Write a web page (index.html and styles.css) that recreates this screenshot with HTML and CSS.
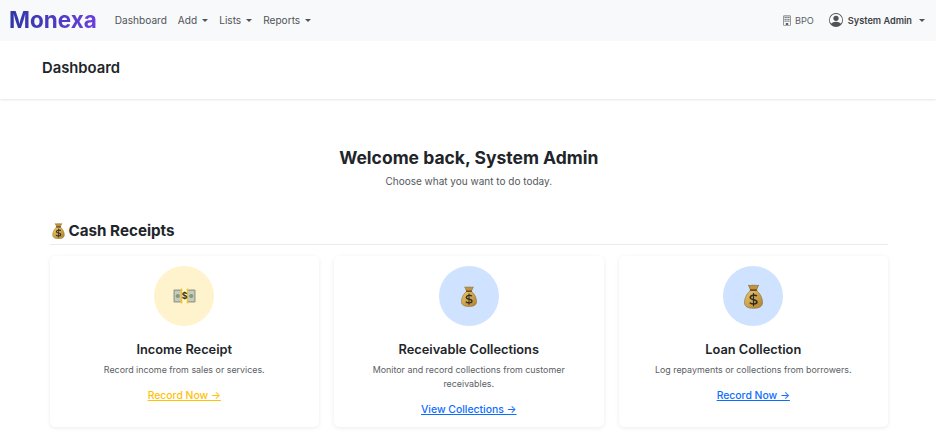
FILE: index.html
```html
<!DOCTYPE html>
<html lang="en">
<head>
<meta charset="utf-8">
<title>Monexa - Dashboard</title>
<link rel="stylesheet" href="styles.css">
</head>
<body>
<svg class="defs" width="0" height="0" aria-hidden="true">
  <defs>
    <linearGradient id="bagFill" x1="0" y1="0" x2="1" y2="1">
      <stop offset="0" stop-color="#edc769"/>
      <stop offset="1" stop-color="#b0812d"/>
    </linearGradient>
    <symbol id="bag" viewBox="0 0 28 36">
      <path d="M6.5 1.2 C9.5 3.2 11.5 .4 14 1.6 C16.5 .4 18.5 3.2 21.5 1.2 L18 9 L10 9 Z" fill="#c4933d" stroke="#82601f" stroke-width=".9"/>
      <path d="M10 9 C4.5 13 .8 20 .8 27 C.8 33 6 35.4 14 35.4 C22 35.4 27.2 33 27.2 27 C27.2 20 23.5 13 18 9 Z" fill="url(#bagFill)" stroke="#8a6224" stroke-width=".9"/>
      <rect x="8.5" y="7.4" width="11" height="2.6" rx="1.2" fill="#6f4f1f"/>
      <path d="M19 17.6 C17.8 15.4 9.8 15.2 9.2 19.3 C8.8 23.6 19.4 21.7 19.2 26.2 C19 30 10.2 29.8 8.6 27" fill="none" stroke="#2e2c28" stroke-width="2.3"/>
      <path d="M14 12.8 V32.4" stroke="#2e2c28" stroke-width="1.7"/>
    </symbol>
    <symbol id="cash" viewBox="0 0 24 16">
      <rect x=".5" y="1.2" width="23" height="13.6" rx="1" fill="#979c8c"/>
      <rect x="1.8" y="2.6" width="6.4" height="10.8" fill="#c6cbbc"/>
      <rect x="15.8" y="2.6" width="6.4" height="10.8" fill="#c6cbbc"/>
      <circle cx="5" cy="8" r="2.2" fill="#8b9580"/>
      <circle cx="19" cy="8" r="2.2" fill="#8b9580"/>
      <rect x="8.2" y=".2" width="7.6" height="15.6" fill="#fff6d8"/>
      <rect x="8.2" y=".2" width="1.5" height="15.6" fill="#f5c518"/>
      <rect x="14.3" y=".2" width="1.5" height="15.6" fill="#f5c518"/>
      <text x="12" y="11.2" class="cash-sign">$</text>
    </symbol>
  </defs>
</svg>

<nav class="navbar">
  <a class="brand" href="#">Monexa</a>
  <ul class="nav-links">
    <li><a href="#">Dashboard</a></li>
    <li><a class="caret" href="#">Add</a></li>
    <li><a class="caret" href="#">Lists</a></li>
    <li><a class="caret" href="#">Reports</a></li>
  </ul>
  <div class="nav-right">
    <span class="branch">
      <svg class="nav-icon" viewBox="0 0 16 16" fill="currentColor"><path d="M4 2.5a.5.5 0 0 1 .5-.5h1a.5.5 0 0 1 .5.5v1a.5.5 0 0 1-.5.5h-1a.5.5 0 0 1-.5-.5zm3 0a.5.5 0 0 1 .5-.5h1a.5.5 0 0 1 .5.5v1a.5.5 0 0 1-.5.5h-1a.5.5 0 0 1-.5-.5zm3.5-.5a.5.5 0 0 0-.5.5v1a.5.5 0 0 0 .5.5h1a.5.5 0 0 0 .5-.5v-1a.5.5 0 0 0-.5-.5zM4 5.5a.5.5 0 0 1 .5-.5h1a.5.5 0 0 1 .5.5v1a.5.5 0 0 1-.5.5h-1a.5.5 0 0 1-.5-.5zM7.5 5a.5.5 0 0 0-.5.5v1a.5.5 0 0 0 .5.5h1a.5.5 0 0 0 .5-.5v-1a.5.5 0 0 0-.5-.5zm2.5.5a.5.5 0 0 1 .5-.5h1a.5.5 0 0 1 .5.5v1a.5.5 0 0 1-.5.5h-1a.5.5 0 0 1-.5-.5zM4.5 8a.5.5 0 0 0-.5.5v1a.5.5 0 0 0 .5.5h1a.5.5 0 0 0 .5-.5v-1a.5.5 0 0 0-.5-.5zm2.5.5a.5.5 0 0 1 .5-.5h1a.5.5 0 0 1 .5.5v1a.5.5 0 0 1-.5.5h-1a.5.5 0 0 1-.5-.5zm3.5-.5a.5.5 0 0 0-.5.5v1a.5.5 0 0 0 .5.5h1a.5.5 0 0 0 .5-.5v-1a.5.5 0 0 0-.5-.5z"/><path d="M2 1a1 1 0 0 1 1-1h10a1 1 0 0 1 1 1v14a1 1 0 0 1-1 1H3a1 1 0 0 1-1-1zm11 0H3v14h3v-2.5a.5.5 0 0 1 .5-.5h3a.5.5 0 0 1 .5.5V15h3z"/></svg>
      BPO
    </span>
    <a class="user caret" href="#">
      <svg class="user-icon" viewBox="0 0 16 16" fill="currentColor"><path d="M11 6a3 3 0 1 1-6 0 3 3 0 0 1 6 0"/><path fill-rule="evenodd" d="M0 8a8 8 0 1 1 16 0A8 8 0 0 1 0 8m8-7a7 7 0 0 0-5.468 11.37C3.242 11.226 4.805 10 8 10s4.757 1.225 5.468 2.37A7 7 0 0 0 8 1"/></svg>
      System Admin
    </a>
  </div>
</nav>

<header class="page-header">
  <h1>Dashboard</h1>
</header>

<main class="content">
  <section class="welcome">
    <h2>Welcome back, System Admin</h2>
    <p>Choose what you want to do today.</p>
  </section>

  <section class="group">
    <h3 class="group-title"><svg class="title-bag"><use href="#bag"/></svg>Cash Receipts</h3>
    <div class="cards">
      <article class="card">
        <div class="circle circle-yellow"><svg class="emoji-cash"><use href="#cash"/></svg></div>
        <h4>Income Receipt</h4>
        <p>Record income from sales or services.</p>
        <a class="action action-yellow" href="#">Record Now →</a>
      </article>
      <article class="card">
        <div class="circle circle-blue"><svg class="emoji-bag"><use href="#bag"/></svg></div>
        <h4>Receivable Collections</h4>
        <p>Monitor and record collections from customer receivables.</p>
        <a class="action action-blue" href="#">View Collections →</a>
      </article>
      <article class="card">
        <div class="circle circle-blue"><svg class="emoji-bag-lg"><use href="#bag"/></svg></div>
        <h4>Loan Collection</h4>
        <p>Log repayments or collections from borrowers.</p>
        <a class="action action-blue" href="#">Record Now →</a>
      </article>
    </div>
  </section>
</main>
</body>
</html>
```

FILE: styles.css
```css
* { box-sizing: border-box; }
html, body { margin: 0; padding: 0; height: 100%; overflow: hidden; }
body { font-family: Inter, "Liberation Sans", sans-serif; background: #fff; color: #212529; }
a { text-decoration: none; }
.defs { display: block; height: 0; }
.cash-sign { font: 700 9px Inter, sans-serif; fill: #3a3520; text-anchor: middle; }

.navbar { display: flex; align-items: center; height: 41px; padding: 0 11px 1px 9px; background: #f8f9fa; }
.brand { font-size: 22.5px; font-weight: 700; line-height: 1; margin-right: 18px; background: linear-gradient(90deg, #2f37a6, #6a3fdc); -webkit-background-clip: text; background-clip: text; color: transparent; }
.nav-links { display: flex; gap: 11px; list-style: none; margin: 0; padding: 0; font-size: 10.1px; }
.nav-links a { color: #4f5357; }
.caret::after { content: ""; display: inline-block; margin-left: 5px; vertical-align: 2px; border-top: 3px solid #4f5357; border-left: 3px solid transparent; border-right: 3px solid transparent; }
.nav-right { margin-left: auto; display: flex; align-items: center; gap: 15px; font-size: 9.2px; color: #5c6064; }
.branch { display: flex; align-items: center; gap: 3px; }
.nav-icon { width: 10px; height: 11px; color: #5c6064; }
.user { display: flex; align-items: center; gap: 5px; color: #3f4347; font-weight: 600; }
.user.caret::after { vertical-align: 0; margin-left: 2px; }
.user-icon { width: 14px; height: 14px; color: #4f5357; }

.page-header { display: flex; align-items: center; height: 58px; padding: 0 42px 4px; background: #fff; box-shadow: 0 1px 2px rgba(0,0,0,.1); }
.page-header h1 { margin: 0; font-size: 14.8px; font-weight: 600; color: #212529; }

.content { padding: 0 48px 0 49.5px; }
.welcome { text-align: center; padding-top: 47px; }
.welcome h2 { margin: 0; font-size: 17.5px; line-height: 24px; font-weight: 700; }
.welcome p { margin: 4px 0 0; font-size: 10px; line-height: 14px; color: #54585c; }

.group { margin-top: 33px; }
.group-title { display: flex; align-items: center; gap: 4px; margin: 0 0 11px; padding: 0 0 3px; border-bottom: 1px solid #e9ecef; font-size: 15.2px; line-height: 20px; font-weight: 700; }
.title-bag { width: 13px; height: 16px; margin-left: 2px; }
.cards { display: grid; grid-template-columns: repeat(3, 1fr); gap: 15px; }
.card { display: flex; flex-direction: column; align-items: center; height: 171px; padding: 10px 14px 0; background: #fff; border-radius: 5px; box-shadow: 0 1px 4px rgba(0,0,0,.08); text-align: center; }
.circle { display: flex; align-items: center; justify-content: center; width: 60px; height: 60px; border-radius: 50%; }
.circle-yellow { background: #fff3cd; }
.circle-blue { background: #cfe2ff; }
.emoji-cash { width: 23px; height: 16px; }
.emoji-bag { width: 16px; height: 21px; }
.emoji-bag-lg { width: 19px; height: 25px; }
.card h4 { margin: 16px 0 0; font-size: 12.8px; line-height: 16px; font-weight: 600; }
.card p { margin: 5px 0 0; font-size: 8.9px; line-height: 14px; color: #5c6064; }
.action { margin-top: 12px; font-size: 10.4px; line-height: 14px; font-weight: 500; text-decoration: underline; }
.action-yellow { color: #ffc107; }
.action-blue { color: #0d6efd; }
```
